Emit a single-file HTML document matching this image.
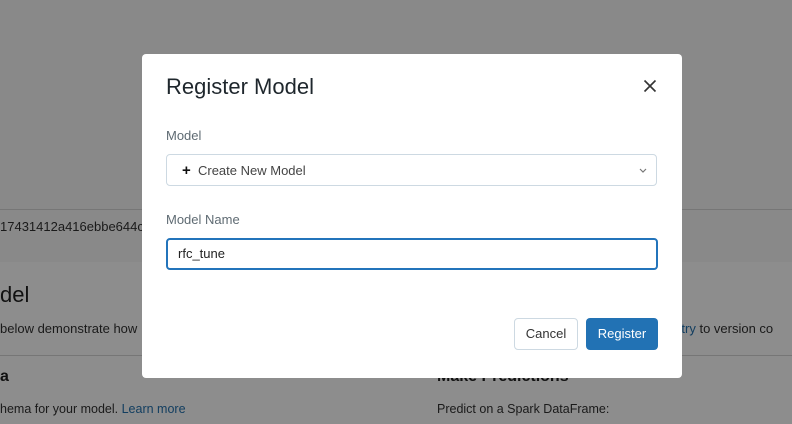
<!DOCTYPE html>
<html><head><style>
body{margin:0;width:792px;height:424px;overflow:hidden;background:#898989;font-family:"Liberation Sans",sans-serif;position:relative}
.a{position:absolute;white-space:nowrap}
</style></head><body>
<div class="a" style="left:0;top:209px;width:792px;height:1px;background:#767676"></div>
<div class="a" style="left:0;top:262px;width:792px;height:162px;background:#8d8d8d"></div>
<div class="a" style="left:0;top:355px;width:792px;height:1px;background:#767676"></div>
<div class="a" style="left:0;top:219px;font-size:13px;color:#1a1a1a">17431412a416ebbe644c9</div>
<div class="a" style="left:0;top:282px;font-size:22px;color:#111">del</div>
<div class="a" style="left:0;top:321px;font-size:13px;color:#1a1a1a">below demonstrate how</div>
<div class="a" style="left:0;top:368px;font-size:16px;font-weight:bold;color:#111">a</div>
<div class="a" style="left:0;top:402px;font-size:12.5px;color:#1a1a1a">hema for your model. <span style="color:#123e60">Learn more</span></div>
<div class="a" style="left:672px;top:321px;font-size:13px;color:#1a1a1a"><span style="color:#123e60">istry</span> to version co</div>
<div class="a" style="left:437px;top:368px;font-size:16px;font-weight:bold;color:#111">Make Predictions</div>
<div class="a" style="left:437px;top:402px;font-size:12.5px;color:#1a1a1a">Predict on a Spark DataFrame:</div>

<div class="a" style="left:142px;top:54px;width:540px;height:324px;background:#fff;border-radius:4px"></div>
<div class="a" style="left:166px;top:74px;font-size:22px;color:#1f272d">Register Model</div>
<svg class="a" style="left:643px;top:79px" width="14" height="14" viewBox="0 0 14 14"><path d="M1.5 1.5L12.5 12.5M12.5 1.5L1.5 12.5" stroke="#333" stroke-width="1.6"/></svg>
<div class="a" style="left:166px;top:128px;font-size:13px;color:#5f6b73">Model</div>
<div class="a" style="left:166px;top:154px;width:489px;height:30px;border:1px solid #cdd9e2;border-radius:4px"></div>
<div class="a" style="left:182px;top:162px;font-size:13px;color:#444"><b style="font-size:15px;color:#111">+</b>&nbsp; Create New Model</div>
<svg class="a" style="left:638px;top:167px" width="10" height="7" viewBox="0 0 10 7"><path d="M2 2L5 5L8 2" stroke="#777" stroke-width="1.2" fill="none"/></svg>
<div class="a" style="left:166px;top:212px;font-size:13px;color:#5f6b73">Model Name</div>
<div class="a" style="left:166px;top:238px;width:488px;height:28px;border:2px solid #2374bb;border-radius:4px"></div>
<div class="a" style="left:178px;top:246px;font-size:13px;color:#222">rfc_tune</div>
<div class="a" style="left:514px;top:318px;width:62px;height:30px;border:1px solid #cdd9e2;border-radius:4px;font-size:13px;color:#333;text-align:center;line-height:30px">Cancel</div>
<div class="a" style="left:586px;top:318px;width:72px;height:32px;background:#2272b4;border-radius:4px;font-size:13px;color:#fff;text-align:center;line-height:32px">Register</div>
</body></html>
